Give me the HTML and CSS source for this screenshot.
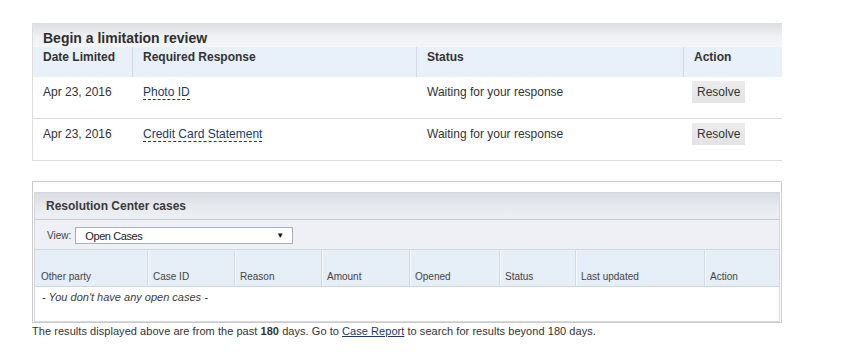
FILE: index.html
```html
<!DOCTYPE html>
<html>
<head>
<meta charset="utf-8">
<link rel="stylesheet" href="styles.css">
</head>
<body>
<div class="page">
  <section class="review">
    <div class="review-title">Begin a limitation review</div>
    <div class="rrow rhead">
      <div class="rc">Date Limited</div>
      <div class="rc sep">Required Response</div>
      <div class="rc sep">Status</div>
      <div class="rc sep">Action</div>
    </div>
    <div class="rrow rbody">
      <div class="rc">Apr 23, 2016</div>
      <div class="rc"><a class="dlink" href="#">Photo ID</a></div>
      <div class="rc">Waiting for your response</div>
      <div class="rc act"><span class="btn">Resolve</span></div>
    </div>
    <div class="rrow rbody">
      <div class="rc">Apr 23, 2016</div>
      <div class="rc"><a class="dlink" href="#">Credit Card Statement</a></div>
      <div class="rc">Waiting for your response</div>
      <div class="rc act"><span class="btn">Resolve</span></div>
    </div>
  </section>

  <section class="cases">
    <div class="cases-inner">
      <div class="cases-title">Resolution Center cases</div>
      <div class="view-row">
        <span class="view-label">View:</span>
        <div class="fake-select"><span>Open Cases</span><span class="arrow">&#9660;</span></div>
      </div>
      <div class="crow chead">
        <div class="cc">Other party</div>
        <div class="cc sep">Case ID</div>
        <div class="cc sep">Reason</div>
        <div class="cc sep">Amount</div>
        <div class="cc sep">Opened</div>
        <div class="cc sep">Status</div>
        <div class="cc sep">Last updated</div>
        <div class="cc sep">Action</div>
      </div>
      <div class="empty">- You don't have any open cases -</div>
    </div>
  </section>
  <p class="footnote">The results displayed above are from the past <b>180</b> days. Go to <a class="ulink" href="#">Case Report</a> to search for results beyond 180 days.</p>
</div>
</body>
</html>
```

FILE: styles.css
```css
html, body {
  margin: 0;
  padding: 0;
  background: #ffffff;
}
body {
  font-family: "Liberation Sans", Arial, sans-serif;
  color: #333333;
}
.page {
  padding: 23px 0 0 32px;
}
.review {
  width: 749px;
  border-left: 1px solid #dddddd;
}
.review-title {
  height: 24px;
  box-sizing: border-box;
  padding: 7px 0 0 10px;
  font-size: 14px;
  line-height: 16px;
  font-weight: bold;
  color: #2f2f2f;
  background: linear-gradient(#dcdfe3, #eef0f2 55%, #f5f6f7);
}
.rrow {
  display: grid;
  grid-template-columns: 99px 284px 267px 98px;
}
.rhead {
  height: 30px;
  background: #e8f0f9;
  font-size: 12px;
  font-weight: bold;
  line-height: 16px;
}
.rhead .rc {
  padding: 2px 0 0 10px;
}
.rhead .sep {
  border-left: 1px solid #d3dae3;
  padding-left: 10px;
}
.rbody {
  height: 42px;
  box-sizing: border-box;
  border-bottom: 1px solid #dddddd;
  font-size: 12px;
  line-height: 16px;
}
.rbody .rc {
  padding: 7px 0 0 10px;
}
.rbody .rc:nth-child(n+2) {
  padding-left: 11px;
}
.rbody .act {
  padding: 4px 0 0 9px;
}
.rbody .rc.act {
  padding-left: 9px;
}
.dlink {
  color: #203a6b;
  text-decoration: none;
  border-bottom: 1px dashed #203a6b;
}
.btn {
  display: inline-block;
  height: 22px;
  line-height: 22px;
  padding: 0 5px 0 5px;
  font-size: 12px;
  color: #333333;
  background: linear-gradient(#ececec, #e3e3e3);
}
.cases {
  margin-top: 20px;
  width: 750px;
  box-sizing: border-box;
  border: 1px solid #cccccc;
  padding: 10px 1px 0 1px;
}
.cases-inner {
  border: 1px solid #d4d8de;
}
.cases-title {
  height: 27px;
  box-sizing: border-box;
  padding: 5px 0 0 11px;
  font-size: 12px;
  line-height: 16px;
  font-weight: bold;
  color: #3a3a3a;
  border-bottom: 1px solid #c7ccd3;
  background: linear-gradient(#d9dde3, #e8ebef 60%, #edf0f3);
}
.view-row {
  height: 30px;
  box-sizing: border-box;
  border-bottom: 1px solid #d3d8df;
  background: #eef0f5;
  display: flex;
  align-items: flex-start;
  padding: 7px 0 0 12px;
}
.view-label {
  font-size: 10px;
  line-height: 17px;
  color: #444444;
  margin-right: 4px;
}
.fake-select {
  width: 218px;
  height: 17px;
  box-sizing: border-box;
  border: 1px solid #a8b0b9;
  background: #ffffff;
  display: flex;
  justify-content: space-between;
  align-items: center;
  padding: 0 8px 0 9px;
  font-size: 11px;
  letter-spacing: -0.4px;
  color: #222222;
}
.arrow {
  font-size: 8px;
  letter-spacing: 0;
  color: #111111;
}
.crow {
  display: grid;
  grid-template-columns: 112px 87px 87px 88px 90px 76px 129px 75px;
}
.chead {
  height: 37px;
  box-sizing: border-box;
  border-bottom: 1px solid #cfd5dc;
  background: #e6eef8;
}
.cc {
  display: flex;
  align-items: flex-end;
  padding: 0 0 3px 6px;
  font-size: 10px;
  line-height: 12px;
  color: #444444;
}
.cc.sep {
  border-left: 1px solid #d2dae4;
  box-shadow: inset 1px 0 0 #f6f9fc;
  padding-left: 5px;
}
.empty {
  height: 34px;
  box-sizing: border-box;
  padding: 3px 0 0 7px;
  font-size: 11px;
  line-height: 14px;
  font-style: italic;
  color: #3c3c3c;
}
.footnote {
  margin: 1px 0 0 0;
  font-size: 11px;
  line-height: 14px;
  letter-spacing: 0.05px;
  color: #333333;
}
.footnote b {
  font-weight: bold;
}
.ulink {
  color: #203a6b;
  text-decoration: underline;
}
```
